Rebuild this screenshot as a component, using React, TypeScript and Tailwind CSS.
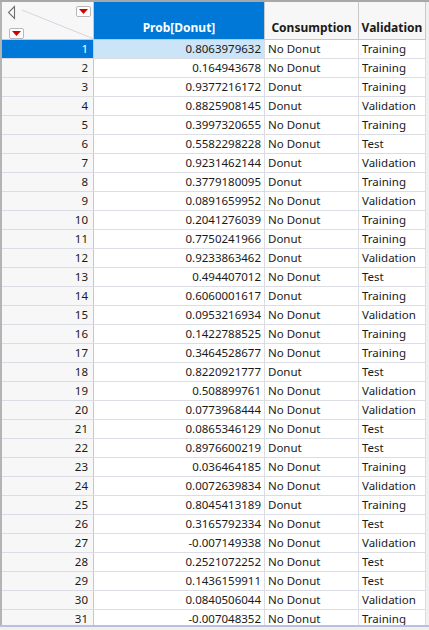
import React from 'react';

const rows: [string, string, string][] = [
  ['0.8063979632', 'No Donut', 'Training'],
  ['0.164943678', 'No Donut', 'Training'],
  ['0.9377216172', 'Donut', 'Training'],
  ['0.8825908145', 'Donut', 'Validation'],
  ['0.3997320655', 'No Donut', 'Training'],
  ['0.5582298228', 'No Donut', 'Test'],
  ['0.9231462144', 'Donut', 'Validation'],
  ['0.3779180095', 'Donut', 'Training'],
  ['0.0891659952', 'No Donut', 'Validation'],
  ['0.2041276039', 'No Donut', 'Training'],
  ['0.7750241966', 'Donut', 'Training'],
  ['0.9233863462', 'Donut', 'Validation'],
  ['0.494407012', 'No Donut', 'Test'],
  ['0.6060001617', 'Donut', 'Training'],
  ['0.0953216934', 'No Donut', 'Validation'],
  ['0.1422788525', 'No Donut', 'Training'],
  ['0.3464528677', 'No Donut', 'Training'],
  ['0.8220921777', 'Donut', 'Test'],
  ['0.508899761', 'No Donut', 'Validation'],
  ['0.0773968444', 'No Donut', 'Validation'],
  ['0.0865346129', 'No Donut', 'Test'],
  ['0.8976600219', 'Donut', 'Test'],
  ['0.036464185', 'No Donut', 'Training'],
  ['0.0072639834', 'No Donut', 'Validation'],
  ['0.8045413189', 'Donut', 'Training'],
  ['0.3165792334', 'No Donut', 'Test'],
  ['-0.007149338', 'No Donut', 'Validation'],
  ['0.2521072252', 'No Donut', 'Test'],
  ['0.1436159911', 'No Donut', 'Test'],
  ['0.0840506044', 'No Donut', 'Validation'],
  ['-0.007048352', 'No Donut', 'Training'],
];

function RedMenu() {
  return (
    <div className="w-[15px] h-[11px] border border-[#b8b8b8] rounded-[2px] bg-white flex items-center justify-center">
      <svg width="9" height="5" viewBox="0 0 9 5">
        <path d="M0 0 L9 0 L4.5 5 Z" fill="#d40000" />
      </svg>
    </div>
  );
}

function Corner() {
  return (
    <div className="relative h-full bg-[#f7f7f7] border-r border-[#c8c8c8]">
      <svg className="absolute inset-0" width="92" height="37" viewBox="0 0 92 37">
        <line x1="20" y1="8" x2="92" y2="37" stroke="#d4d4e4" strokeWidth="1" />
        <path d="M12.5 4.5 L6.5 10.5 L12.5 16.5 Z" fill="none" stroke="#707070" strokeWidth="1.1" />
      </svg>
      <div className="absolute left-[74px] top-[4px]">
        <RedMenu />
      </div>
      <div className="absolute left-[7px] top-[26px]">
        <RedMenu />
      </div>
    </div>
  );
}

export default function App() {
  return (
    <div
      className="w-[429px] h-[630px] overflow-hidden bg-[#f0f0f0] text-[11.5px] text-[#1a1a1a]"
      style={{ fontFamily: '"Segoe UI", "Noto Sans", sans-serif' }}
    >
      <div className="h-[2px] bg-[#a8a8a8]" />
      <div className="flex h-[623px]">
        <div className="w-[2px] bg-[#b4b4b4] shrink-0" />
        <div className="w-[424px] shrink-0 flex flex-col bg-white overflow-hidden">
          <div className="grid grid-cols-[92px_171px_94px_67px] h-[38px] shrink-0 border-b border-[#c8c8c8] text-[12px]">
            <Corner />
            <div className="bg-[#0078d7] text-white font-bold flex items-end justify-center pb-[2px] border-r border-[#c8c8c8]">
              Prob[Donut]
            </div>
            <div className="bg-[#f7f7f7] font-bold flex items-end justify-center pb-[2px] border-r border-[#c8c8c8]">
              Consumption
            </div>
            <div className="bg-[#f7f7f7] font-bold flex items-end justify-center pb-[2px] border-r border-[#c8c8c8]">
              Validation
            </div>
          </div>
          {rows.map((r, i) => {
            const sel = i === 0;
            return (
              <div
                key={i}
                className="grid grid-cols-[92px_171px_94px_67px] h-[19px] shrink-0 border-b border-[#dcdce4] leading-[18px]"
              >
                <div
                  className={
                    sel
                      ? 'bg-[#0078d7] text-white text-right pr-[5px] border-r border-[#c8c8c8]'
                      : 'bg-[#f7f7f7] text-right pr-[5px] border-r border-[#c8c8c8]'
                  }
                >
                  {i + 1}
                </div>
                <div
                  className={
                    sel
                      ? 'bg-[#cce4f7] text-right pr-[3px] border-r border-[#dcdce4]'
                      : 'text-right pr-[3px] border-r border-[#dcdce4]'
                  }
                >
                  {r[0]}
                </div>
                <div className="pl-[3px] border-r border-[#dcdce4]">{r[1]}</div>
                <div className="pl-[3px] border-r border-[#dcdce4]">{r[2]}</div>
              </div>
            );
          })}
        </div>
      </div>
      <div className="h-[2px] bg-[#b8c0e0]" />
    </div>
  );
}
